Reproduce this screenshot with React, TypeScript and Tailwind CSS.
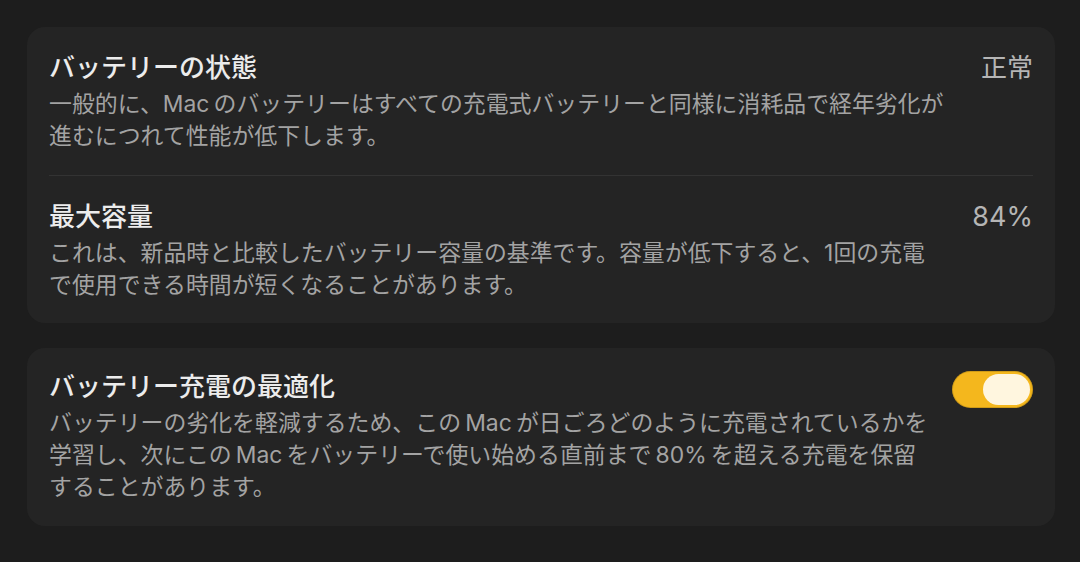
const font = { fontFamily: 'Inter, "Noto Sans CJK JP", sans-serif' };

type RowProps = {
  title: string;
  lines: string[];
  right: React.ReactNode;
  className?: string;
};

function Row({ title, lines, right, className = '' }: RowProps) {
  return (
    <div className={`flex items-start justify-between ${className}`}>
      <div className="flex flex-col gap-[3px]">
        <h2 className="text-[26px] leading-[34px] font-medium text-[#ececec] whitespace-nowrap">{title}</h2>
        <p className="text-[22.9px] leading-[32px] text-[#a3a3a3] whitespace-nowrap">
          {lines.map((l) => (
            <span key={l} className="block">
              {l}
            </span>
          ))}
        </p>
      </div>
      {right}
    </div>
  );
}

function Toggle() {
  return (
    <div className="mt-[1px] w-[81px] h-[37px] rounded-full bg-[#f4b71d] flex items-center justify-end px-[3px] shadow-[inset_0_0_0_1px_rgba(0,0,0,0.15)]">
      <div className="w-[47px] h-[31px] rounded-full bg-[#fff6df]" />
    </div>
  );
}

export default function App() {
  return (
    <div className="w-[1080px] h-[562px] bg-[#1d1d1d] pt-[27px] pl-[27px] pr-[25px] flex flex-col gap-[25px]" style={font}>
      <div className="bg-[#242424] rounded-[18px] px-[22px]">
        <Row
          className="pt-[24px] pb-[23px] border-b border-[#333333]"
          title="バッテリーの状態"
          lines={[
            '一般的に、Mac\u2009のバッテリーはすべての充電式バッテリーと同様に消耗品で経年劣化が',
            '進むにつれて性能が低下します。',
          ]}
          right={<span className="text-[26px] leading-[34px] text-[#b5b5b5]">正常</span>}
        />
        <Row
          className="pt-[24px] pb-[22px]"
          title="最大容量"
          lines={[
            'これは、新品時と比較したバッテリー容量の基準です。容量が低下すると、1回の充電',
            'で使用できる時間が短くなることがあります。',
          ]}
          right={<span className="text-[27px] leading-[34px] text-[#b5b5b5]">84%</span>}
        />
      </div>
      <div className="bg-[#242424] rounded-[18px] px-[22px] pt-[22px] pb-[23px]">
        <Row
          title="バッテリー充電の最適化"
          lines={[
            'バッテリーの劣化を軽減するため、この\u2009Mac\u2009が日ごろどのように充電されているかを',
            '学習し、次にこの\u2009Mac\u2009をバッテリーで使い始める直前まで\u200980%\u2009を超える充電を保留',
            'することがあります。',
          ]}
          right={<Toggle />}
        />
      </div>
    </div>
  );
}
